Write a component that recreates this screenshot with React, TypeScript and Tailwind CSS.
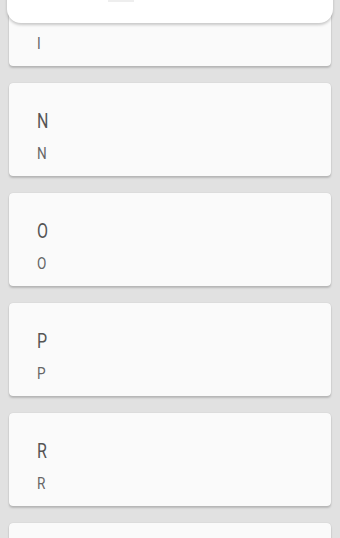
import React from "react";

const items = ["I", "N", "O", "P", "R", ""];

function Card({ label }: { label: string }) {
  return (
    <div className="h-[93px] shrink-0 rounded-[4px] bg-[#fafafa] pl-[28px] pt-[26px] shadow-[0_2px_2px_rgba(0,0,0,0.18),0_0_1px_rgba(0,0,0,0.2)]">
      {label && (
        <>
          <div className="h-[24px] text-[20px] leading-[24px] text-[#555555]">
            <span className="inline-block origin-left scale-x-[0.8]">{label}</span>
          </div>
          <div className="mt-[10px] h-[20px] text-[17px] leading-[20px] text-[#666666]">
            <span className="inline-block origin-left scale-x-[0.8]">{label}</span>
          </div>
        </>
      )}
    </div>
  );
}

export default function App() {
  return (
    <div
      className="relative h-[538px] w-[340px] overflow-hidden bg-[#e1e1e1]"
      style={{ fontFamily: "Roboto, 'Noto Sans', sans-serif" }}
    >
      <div className="mx-[9px] -mt-[27px] flex flex-col gap-[17px]">
        {items.map((l, i) => (
          <Card key={i} label={l} />
        ))}
      </div>
      <div className="absolute left-[7px] right-[7px] top-[-40px] h-[63px] rounded-[14px] bg-white shadow-[0_2px_3px_rgba(0,0,0,0.2)]">
        <div className="absolute bottom-[21px] left-[101px] h-[2px] w-[26px] bg-[#eeeeee]" />
      </div>
    </div>
  );
}
